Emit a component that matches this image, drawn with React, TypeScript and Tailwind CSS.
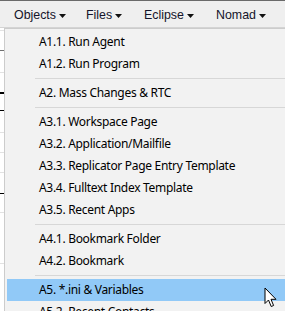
import React from "react";

type Entry = { label: string; active?: boolean } | "sep";

const entries: Entry[] = [
  { label: "A1.1. Run Agent" },
  { label: "A1.2. Run Program" },
  "sep",
  { label: "A2. Mass Changes & RTC" },
  "sep",
  { label: "A3.1. Workspace Page" },
  { label: "A3.2. Application/Mailfile" },
  { label: "A3.3. Replicator Page Entry Template" },
  { label: "A3.4. Fulltext Index Template" },
  { label: "A3.5. Recent Apps" },
  "sep",
  { label: "A4.1. Bookmark Folder" },
  { label: "A4.2. Bookmark" },
  "sep",
  { label: "A5. *.ini & Variables", active: true },
  { label: "A5.2. Recent Contacts" },
];

const menus = [
  { label: "Objects", w: "w-[72px]" },
  { label: "Files", w: "w-[58px]" },
  { label: "Eclipse", w: "w-[72px]" },
  { label: "Nomad", w: "w-auto" },
];

function Caret() {
  return (
    <svg width="7" height="4" viewBox="0 0 7 4" className="ml-[3px] mt-[1px] shrink-0">
      <path d="M0 0 H7 L3.5 4 Z" fill="#111" />
    </svg>
  );
}

export default function App() {
  return (
    <div className="relative w-[285px] h-[311px] overflow-hidden bg-white font-['Liberation_Sans',Arial,sans-serif]">
      {/* menu bar */}
      <div className="h-[28px] border-t border-[#6a6a6a] border-b border-b-[#d4d4d4] bg-[#efefef] flex items-center pl-[14px] pt-[2px]">
        {menus.map((m) => (
          <div key={m.label} className={`${m.w} flex items-center text-[12.4px] text-[#14142a] leading-none`}>
            <span>{m.label}</span>
            <Caret />
          </div>
        ))}
      </div>

      {/* page behind the dropdown */}
      <div className="relative h-[283px]">
        <div className="w-[4px] h-full flex flex-col">
          <div className="h-[3px] border-b border-[#e2e2e2]" />
          <div className="h-[20px] border-b border-[#707070]" />
          <div className="h-[22px] border-b border-[#e2e2e2]" />
          <div className="h-[21px] border-b-2 border-[#000]" />
          <div className="h-[17px] border-b border-[#000]" />
          <div className="h-[22px] border-b border-[#e2e2e2]" />
          <div className="h-[20px] border-b border-[#e2e2e2]" />
          <div className="h-[20px] border-b border-[#e2e2e2]" />
          <div className="h-[21px] border-b border-[#000]" />
          <div className="h-[19px] border-b border-[#e2e2e2]" />
          <div className="h-[51px] border-b border-[#e2e2e2]" />
        </div>

        {/* dropdown */}
        <div className="absolute left-[4px] top-0 w-[300px] h-[300px] bg-[#f2f2f2] border-l border-t border-[#cccccc] pt-[2px] font-['Noto_Sans',sans-serif]">
          {entries.map((e, i) =>
            e === "sep" ? (
              <div key={i} className="h-[7px] flex items-center pl-[30px]">
                <div className="h-px w-full bg-[#d7d7d7]" />
              </div>
            ) : (
              <div
                key={i}
                className={`h-[22px] ml-[2px] pl-[32px] flex items-center text-[12px] tracking-[-0.3px] text-black whitespace-nowrap ${
                  e.active ? "bg-[#91c9f7]" : ""
                }`}
              >
                {e.label}
              </div>
            )
          )}
        </div>
      </div>

      {/* mouse cursor */}
      <svg
        width="13"
        height="21"
        viewBox="0 0 13 21"
        className="absolute left-[264px] top-[287px]"
      >
        <path
          d="M1 1 L1 16.5 L4.5 13 L7.2 19.5 L9.6 18.5 L7 12.3 L12 12.3 Z"
          fill="#fff"
          stroke="#000"
          strokeWidth="1"
          strokeLinejoin="miter"
        />
      </svg>
    </div>
  );
}
